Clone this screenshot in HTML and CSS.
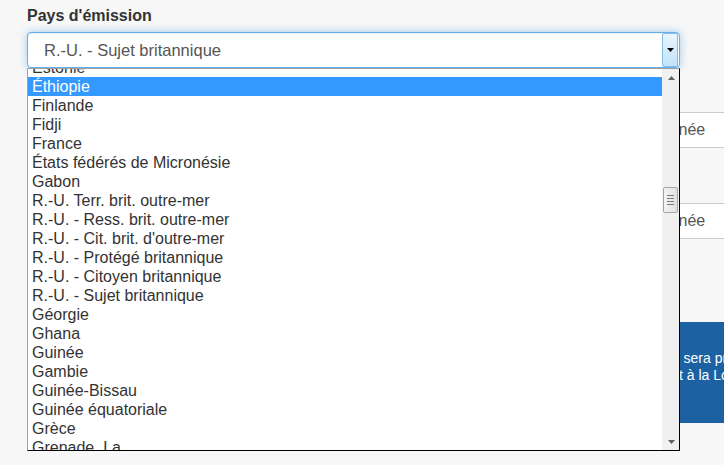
FILE: index.html
```html
<!DOCTYPE html>
<html lang="fr">
<head>
<meta charset="utf-8">
<title>Pays d'émission</title>
<link rel="stylesheet" href="styles.css">
</head>
<body>
<div class="page">
  <div class="field">
    <label class="label">Pays d'émission</label>
    <div class="select">
      <span class="select-value">R.-U. - Sujet britannique</span>
      <span class="select-btn"><svg width="7" height="4" viewBox="0 0 7 4"><path d="M0 0H7L3.5 4Z" fill="#000"/></svg></span>
    </div>
    <div class="dropdown">
      <div class="viewport">
        <ul class="options">
          <li>Estonie</li>
          <li class="active">Éthiopie</li>
          <li>Finlande</li>
          <li>Fidji</li>
          <li>France</li>
          <li>États fédérés de Micronésie</li>
          <li>Gabon</li>
          <li>R.-U. Terr. brit. outre-mer</li>
          <li>R.-U. - Ress. brit. outre-mer</li>
          <li>R.-U. - Cit. brit. d'outre-mer</li>
          <li>R.-U. - Protégé britannique</li>
          <li>R.-U. - Citoyen britannique</li>
          <li>R.-U. - Sujet britannique</li>
          <li>Géorgie</li>
          <li>Ghana</li>
          <li>Guinée</li>
          <li>Gambie</li>
          <li>Guinée-Bissau</li>
          <li>Guinée équatoriale</li>
          <li>Grèce</li>
          <li>Grenade, La</li>
          <li>Groenland</li>
        </ul>
      </div>
      <div class="scrollbar">
        <div class="sb-btn"><svg width="7" height="4" viewBox="0 0 7 4"><path d="M3.5 0L7 4H0Z" fill="#606060"/></svg></div>
        <div class="sb-track">
          <div class="sb-thumb"><svg width="7" height="10" viewBox="0 0 7 10"><path d="M0 0.5H7M0 3.5H7M0 6.5H7M0 9.5H7" stroke="#7a7a7a" stroke-width="1"/></svg></div>
        </div>
        <div class="sb-btn"><svg width="7" height="4" viewBox="0 0 7 4"><path d="M0 0H7L3.5 4Z" fill="#606060"/></svg></div>
      </div>
    </div>
  </div>
  <div class="form-row">
    <div class="col-left"></div>
    <div class="col-right">
      <div class="input input-first">Année</div>
      <div class="input input-second">Année</div>
      <div class="note">
        <span class="note-line">- sera pris en compte</span>
        <span class="note-line note-line-2">t à la Loi sur les passeports</span>
      </div>
    </div>
  </div>
</div>
</body>
</html>
```
FILE: styles.css
```css
html, body {
  margin: 0;
  padding: 0;
}

body {
  width: 724px;
  height: 465px;
  overflow: hidden;
  background: #f7f7f7;
  font-family: "Liberation Sans", Arial, sans-serif;
  color: #333;
}

.page {
  padding-top: 6px;
}

.field {
  position: relative;
  width: 653px;
  margin-left: 27px;
}

.label {
  display: block;
  font-weight: bold;
  font-size: 16px;
  line-height: 20px;
  color: #333;
  margin-bottom: 6px;
}

.select {
  display: flex;
  align-items: center;
  height: 36px;
  box-sizing: border-box;
  border: 1px solid #66afe9;
  border-radius: 4px;
  background: #fff;
  box-shadow: inset 0 1px 1px rgba(0, 0, 0, 0.075), 0 0 8px rgba(102, 175, 233, 0.6);
}

.select-value {
  flex: 1;
  padding-left: 16px;
  font-size: 16.5px;
  color: #555;
}

.select-btn {
  width: 16px;
  height: 34px;
  box-sizing: border-box;
  margin-right: 1px;
  border: 1px solid #86bbe6;
  border-radius: 2px;
  background: linear-gradient(#eaf6fd, #bfe3f9);
  display: flex;
  align-items: center;
  justify-content: center;
}

.select-btn svg {
  display: block;
  margin-left: 1px;
}

.dropdown {
  position: absolute;
  left: 0;
  top: 100%;
  z-index: 2;
  width: 653px;
  height: 383px;
  box-sizing: border-box;
  border: 1px solid;
  border-color: #a0a0a0 #000 #000 #a0a0a0;
  background: #fff;
  display: flex;
}

.viewport {
  flex: 1;
  overflow: hidden;
}

.options {
  list-style: none;
  margin: -11px 0 0 0;
  padding: 0;
}

.options li {
  height: 19px;
  line-height: 19px;
  padding-left: 4px;
  font-size: 16px;
  color: #333;
  white-space: nowrap;
}

.options li.active {
  background: #3399ff;
  color: #fff;
}

.scrollbar {
  width: 17px;
  display: flex;
  flex-direction: column;
  background: #f0f0f0;
}

.sb-btn {
  height: 17px;
  display: flex;
  align-items: center;
  justify-content: center;
}

.sb-btn svg {
  display: block;
  margin-left: 1px;
}

.sb-track {
  flex: 1;
}

.sb-thumb {
  margin: 101px 1px 0 1px;
  height: 26px;
  box-sizing: border-box;
  border: 1px solid #a6a6a6;
  border-radius: 2px;
  background: linear-gradient(to right, #f4f4f4, #e0e0e0);
  display: flex;
  align-items: center;
  justify-content: center;
}

.sb-thumb svg {
  display: block;
}

.form-row {
  display: grid;
  grid-template-columns: 648px 200px;
}

.input {
  height: 36px;
  box-sizing: border-box;
  border: 1px solid #ccc;
  background: #fff;
  padding-left: 10px;
  font-size: 16px;
  line-height: 34px;
  color: #555;
  white-space: nowrap;
}

.input-first {
  margin-top: 44px;
}

.input-second {
  margin-top: 55px;
}

.note {
  margin-top: 83px;
  height: 101px;
  box-sizing: border-box;
  padding: 28px 0 0 27px;
  background: #1c62a3;
  color: #fff;
  font-size: 14px;
  line-height: 17px;
  white-space: nowrap;
  overflow: hidden;
}

.note-line {
  display: block;
}

.note-line-2 {
  padding-left: 4px;
}
```
